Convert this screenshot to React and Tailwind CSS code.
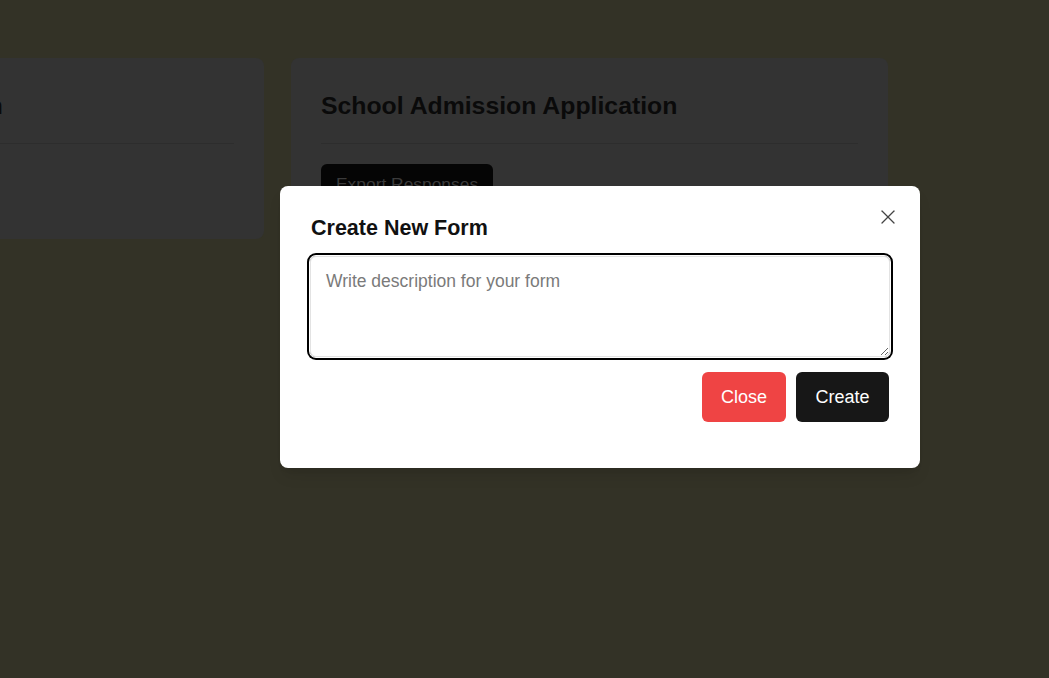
import { X } from 'lucide-react'

const font = { fontFamily: '"Liberation Sans", Arial, sans-serif' }

const FormCard = ({ title }) => (
  <div className="w-[597px] h-[181px] shrink-0 rounded-lg bg-[#333333] px-[30px] pt-[32px]">
    <h2 className="text-[24.8px] leading-8 font-bold text-[#0a0a0a]">{title}</h2>
    <div className="mt-[21px] border-t border-[#2d2d2d]" />
    <button className="mt-5 h-10 rounded-md bg-[#050505] px-[15px] text-[17.4px] text-[#3b3b3b]">
      Export Responses
    </button>
  </div>
)

export default function App() {
  return (
    <div className="relative h-screen w-full overflow-hidden bg-[#333226]" style={font}>
      <div className="flex gap-[27px] pt-[58px] ml-[-333px]">
        <FormCard title="Customer Feedback Form" />
        <FormCard title="School Admission Application" />
      </div>

      <div className="absolute left-[280px] top-[186px] w-[640px] h-[282px] rounded-lg bg-white px-[31px] pt-[28px] shadow-lg">
        <button className="absolute right-[20px] top-[19px] text-[#444]" aria-label="Close">
          <X size={24} strokeWidth={1.3} />
        </button>
        <h3 className="text-[21.5px] leading-7 font-bold text-[#111]">Create New Form</h3>
        <textarea
          autoFocus
          placeholder="Write description for your form"
          className="mt-[14px] block h-[101px] w-[580px] -ml-[1px] resize-y rounded-md border border-[#e3e3e3] px-[15px] py-[13px] text-[17.5px] leading-[22px] text-[#111] placeholder:text-[#7a7a7a] outline-none ring-2 ring-black ring-offset-1 ring-offset-white"
        />
        <div className="mt-[15px] flex justify-end gap-[10px]">
          <button className="h-[50px] w-[84px] rounded-md bg-[#ef4444] text-[18px] text-white">Close</button>
          <button className="h-[50px] w-[93px] rounded-md bg-[#171717] text-[18px] text-white">Create</button>
        </div>
      </div>
    </div>
  )
}
